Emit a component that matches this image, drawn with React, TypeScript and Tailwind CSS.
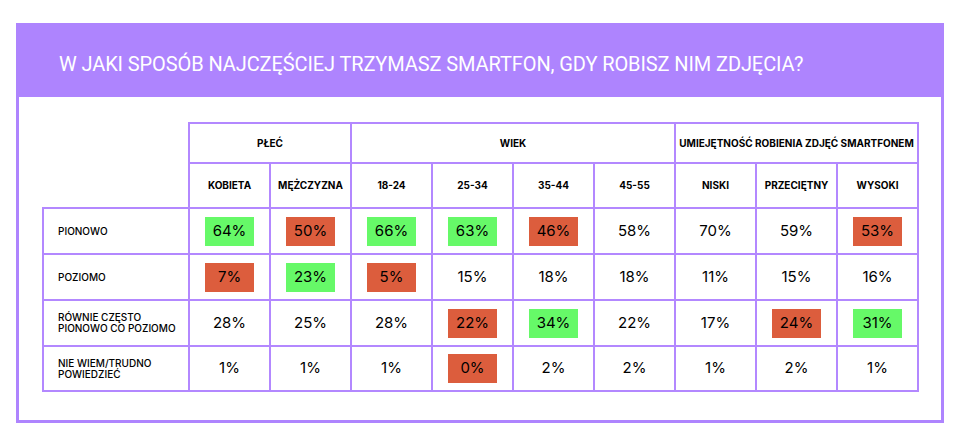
const GREEN = "bg-[#66f968]";
const RED = "bg-[#dc5d3d]";

type Mark = "g" | "r" | null;

const rows: { label: string[]; values: [string, Mark][] }[] = [
  {
    label: ["PIONOWO"],
    values: [
      ["64%", "g"],
      ["50%", "r"],
      ["66%", "g"],
      ["63%", "g"],
      ["46%", "r"],
      ["58%", null],
      ["70%", null],
      ["59%", null],
      ["53%", "r"],
    ],
  },
  {
    label: ["POZIOMO"],
    values: [
      ["7%", "r"],
      ["23%", "g"],
      ["5%", "r"],
      ["15%", null],
      ["18%", null],
      ["18%", null],
      ["11%", null],
      ["15%", null],
      ["16%", null],
    ],
  },
  {
    label: ["RÓWNIE CZĘSTO", "PIONOWO CO POZIOMO"],
    values: [
      ["28%", null],
      ["25%", null],
      ["28%", null],
      ["22%", "r"],
      ["34%", "g"],
      ["22%", null],
      ["17%", null],
      ["24%", "r"],
      ["31%", "g"],
    ],
  },
  {
    label: ["NIE WIEM/TRUDNO", "POWIEDZIEĆ"],
    values: [
      ["1%", null],
      ["1%", null],
      ["1%", null],
      ["0%", "r"],
      ["2%", null],
      ["2%", null],
      ["1%", null],
      ["2%", null],
      ["1%", null],
    ],
  },
];

const subHeads = ["KOBIETA", "MĘŻCZYZNA", "18-24", "25-34", "35-44", "45-55", "NISKI", "PRZECIĘTNY", "WYSOKI"];

const cell = "border-2 border-[#b388ff] text-center align-middle";

function Value({ text, mark }: { text: string; mark: Mark }) {
  if (!mark) return <span>{text}</span>;
  return (
    <span className={`mx-auto flex h-[29px] w-[49px] items-center justify-center ${mark === "g" ? GREEN : RED}`}>
      {text}
    </span>
  );
}

export default function App() {
  return (
    <div className="h-[448px] w-[960px] bg-white pt-[23px] pl-4 font-['Inter',sans-serif] text-black">
      <div className="flex h-[400px] w-[928px] flex-col border-[3px] border-[#ae84fe]">
        <div className="flex h-[71px] items-center bg-[#ae84fe] pt-[5px] pl-[40px]">
          <h1 className="font-['Roboto',sans-serif] text-[20px] font-normal tracking-[-0.1px] text-white">
            W JAKI SPOSÓB NAJCZĘŚCIEJ TRZYMASZ SMARTFON, GDY ROBISZ NIM ZDJĘCIA?
          </h1>
        </div>
        <div className="pt-[25px] pl-[23px]">
          <table className="table-fixed border-collapse">
            <colgroup>
              <col className="w-[146px]" />
              {subHeads.map((h) => (
                <col key={h} className="w-[81px]" />
              ))}
            </colgroup>
            <thead>
              <tr className="h-[40px] text-[10px] font-medium">
                <th rowSpan={2} className="border-0"></th>
                <th colSpan={2} className={cell}>
                  PŁEĆ
                </th>
                <th colSpan={4} className={cell}>
                  WIEK
                </th>
                <th colSpan={3} className={`${cell} whitespace-nowrap`}>
                  UMIEJĘTNOŚĆ ROBIENIA ZDJĘĆ SMARTFONEM
                </th>
              </tr>
              <tr className="h-[45px] text-[10px] font-medium">
                {subHeads.map((h) => (
                  <th key={h} className={cell}>
                    {h}
                  </th>
                ))}
              </tr>
            </thead>
            <tbody>
              {rows.map((r, i) => (
                <tr key={i} className={i === 3 ? "h-[45px]" : "h-[46px]"}>
                  <td className={`${cell} pl-[14px] text-left text-[10px] leading-[11px] font-medium`}>
                    {r.label.map((l) => (
                      <div key={l}>{l}</div>
                    ))}
                  </td>
                  {r.values.map(([v, m], j) => (
                    <td key={j} className={`${cell} text-[15px]`}>
                      <Value text={v} mark={m} />
                    </td>
                  ))}
                </tr>
              ))}
            </tbody>
          </table>
        </div>
      </div>
    </div>
  );
}
